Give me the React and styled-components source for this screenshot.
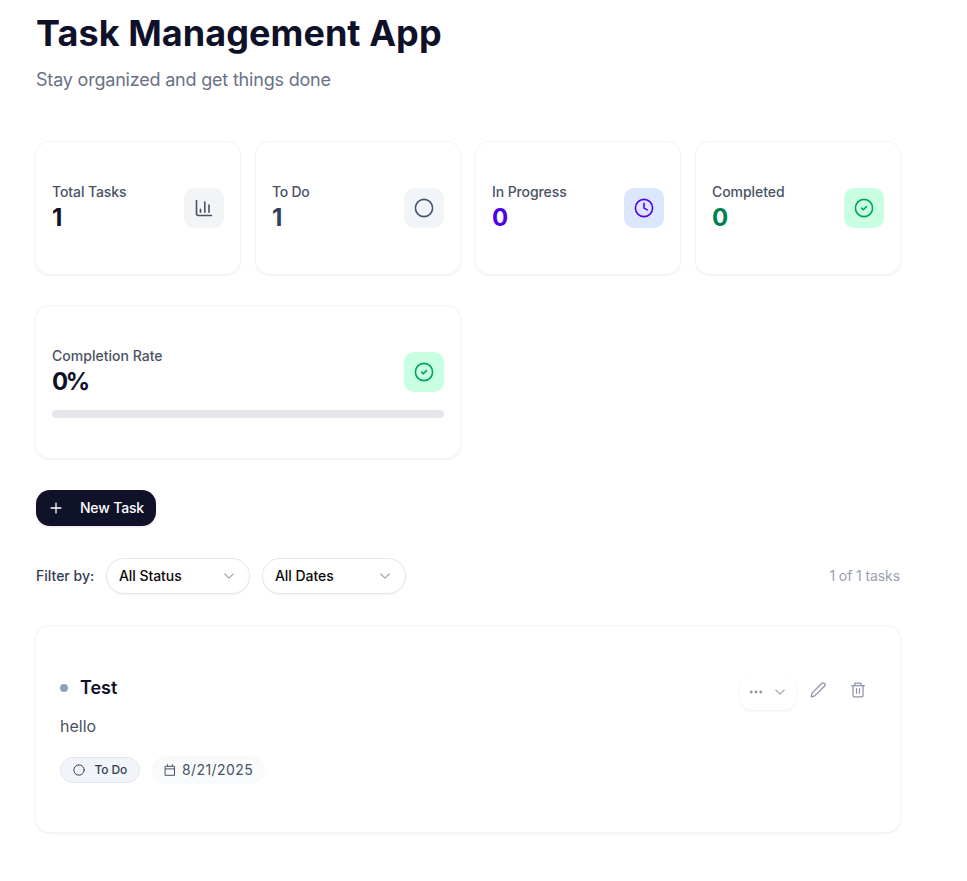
import React from 'react';
import styled, { createGlobalStyle } from 'styled-components';

const GlobalStyle = createGlobalStyle`
  *, *::before, *::after { box-sizing: border-box; }
  html, body { margin: 0; background: #fff; overflow: hidden; }
  body { font-family: Inter, "Liberation Sans", sans-serif; color: #0f1129; }
  h1, h2, p { margin: 0; }
  button { font: inherit; cursor: pointer; }
  svg { display: block; flex: none; }
`;

const Page = styled.main`
  width: 864px;
  height: 881px;
  margin-left: 36px;
  padding-top: 13px;
  display: flex;
  flex-direction: column;
`;
const Title = styled.h1`
  font-size: 36px;
  line-height: 40px;
  font-weight: 700;
  letter-spacing: 0.06px;
  white-space: nowrap;
`;
const Subtitle = styled.p`
  margin-top: 13px;
  font-size: 18px;
  line-height: 28px;
  letter-spacing: -0.2px;
  color: #6a7187;
`;
const Card = styled.section`
  border-radius: 14px;
  background: #fff;
  box-shadow: 0 0 0 1px #f3f4f6, 0 1px 3px rgba(0, 0, 0, 0.1), 0 1px 2px -1px rgba(0, 0, 0, 0.1);
`;
const Stats = styled.div`
  margin-top: 48px;
  display: grid;
  grid-template-columns: repeat(4, 1fr);
  gap: 32px 16px;
`;
const StatCard = styled(Card)`
  grid-column: span ${(p) => p.$span || 1};
  height: ${(p) => p.$height || 132}px;
  padding: 40px 16px 0;
`;
const StatRow = styled.div`
  display: flex;
  align-items: center;
  justify-content: space-between;
`;
const StatLabel = styled.p`
  font-size: 14px;
  line-height: 20px;
  font-weight: 500;
  letter-spacing: ${(p) => p.$track || 0}px;
  color: #4a5265;
`;
const StatValue = styled.p`
  font-size: 24px;
  line-height: 32px;
  font-weight: 700;
  letter-spacing: -2.4px;
  color: ${(p) => p.$color};
`;
const IconTile = styled.div`
  width: 40px;
  height: 40px;
  border-radius: 10px;
  display: grid;
  place-items: center;
  background: ${(p) => p.$bg};
  color: ${(p) => p.$color};
`;
const Track = styled.div`
  height: 8px;
  margin-top: 12px;
  border-radius: 4px;
  background: #e5e6eb;
`;
const NewTask = styled.button`
  width: 120px;
  height: 36px;
  margin-top: 32px;
  padding: 0 12px;
  border: 0;
  border-radius: 14px;
  display: flex;
  align-items: center;
  justify-content: space-between;
  color: #fff;
  background: #10122a;
  box-shadow: 0 1px 2px rgba(0, 0, 0, 0.1);
  font-size: 14px;
  font-weight: 500;
  letter-spacing: -0.16px;
  white-space: nowrap;
`;
const Filters = styled.div`
  margin-top: 32px;
  height: 36px;
  display: flex;
  align-items: center;
`;
/* Lifts a line of text slightly above the middle of its control. */
const Label = styled.span`
  padding-bottom: 2px;
`;
const FilterLabel = styled(Label)`
  width: 70px;
  font-size: 14px;
  font-weight: 500;
  color: #353d54;
  white-space: nowrap;
`;
const Select = styled.button`
  width: 144px;
  height: 36px;
  margin-right: 12px;
  padding: 0 12px;
  border: 1px solid #e5e6eb;
  border-radius: 18px;
  display: flex;
  align-items: center;
  justify-content: space-between;
  background: #fff;
  color: #0a0a0a;
  box-shadow: 0 1px 2px rgba(0, 0, 0, 0.05);
  font-size: 14px;
  font-weight: 500;
  letter-spacing: -0.06px;
`;
const Count = styled(Label)`
  margin-left: auto;
  font-size: 14px;
  letter-spacing: -0.1px;
  color: #9a9fb0;
`;
const TaskCard = styled(Card)`
  margin-top: 32px;
  height: 206px;
  padding: 48px 24px 0;
  display: flex;
  justify-content: space-between;
`;
const TaskHead = styled.div`
  display: flex;
  align-items: center;
  gap: 12px;
`;
const Dot = styled.span`
  width: 8px;
  height: 8px;
  border-radius: 50%;
  background: #90a0bd;
`;
const TaskTitle = styled.h2`
  font-size: 18px;
  line-height: 28px;
  font-weight: 600;
`;
const TaskText = styled.p`
  margin-top: 11px;
  font-size: 16px;
  line-height: 26px;
  color: #4a5265;
`;
const Meta = styled.div`
  margin-top: 17px;
  display: flex;
  align-items: center;
  gap: 12px;
`;
const StatusBadge = styled.span`
  width: 80px;
  height: 26px;
  padding: 0 12px;
  border: 1px solid #e2e8f0;
  border-radius: 13px;
  display: flex;
  align-items: center;
  justify-content: space-between;
  background: #f1f5f9;
  color: #353d54;
  font-size: 12px;
  font-weight: 500;
  letter-spacing: -0.15px;
`;
const DateBadge = styled.span`
  width: 113px;
  height: 28px;
  padding: 0 12px;
  border-radius: 14px;
  display: flex;
  align-items: center;
  gap: 6px;
  background: #f9fafb;
  color: #4a5265;
  font-size: 14px;
  letter-spacing: 0.42px;
`;
const Actions = styled.div`
  height: 36px;
  display: flex;
  align-items: flex-start;
  gap: 4px;
  color: #8e92a8;
`;
const StatusMenu = styled.button`
  width: 56px;
  height: 36px;
  padding: 0 8px;
  border: 0;
  border-radius: 12px;
  display: flex;
  align-items: center;
  justify-content: space-between;
  color: inherit;
  background: #fff;
  box-shadow: 0 1px 3px rgba(0, 0, 0, 0.07);
`;
const IconButton = styled.button`
  width: 36px;
  height: 32px;
  padding: 0;
  border: 0;
  display: grid;
  place-items: center;
  color: inherit;
  background: none;
`;

const Icon = ({ size = 16, box = 24, stroke = 1.6, color = 'currentColor', children }) => (
  <svg width={size} height={size} viewBox={`0 0 ${box} ${box}`} fill="none" stroke={color}
    strokeWidth={stroke} strokeLinecap="round" strokeLinejoin="round">{children}</svg>
);
const Chart = () => <Icon size={20} box={20}><path d="M2.5 2.5v13q0 2 2 2h13M6.5 14.3v-3M10.8 14.3V4M15 14.3V7" /></Icon>;
const Circle = ({ size = 20 }) => <Icon size={size} box={20}><circle cx="10" cy="10" r="8.6" /></Icon>;
const Clock = () => <Icon size={20} box={20}><circle cx="10" cy="10" r="8.6" /><path d="M10 5.2v4.9l3.3 1.8" /></Icon>;
const Check = () => <Icon size={20} box={20}><circle cx="10" cy="10" r="8.6" /><path d="m7.6 10.1 1.7 1.7 3.2-3.2" /></Icon>;
const Plus = () => <Icon stroke={1.9}><path d="M12 4.6v14.8M4.6 12h14.8" /></Icon>;
const Chevron = () => <Icon color="#a9a9ad" stroke={1.9}><path d="m5.8 9 6.2 6.2L18.2 9" /></Icon>;
const Dots = () => <Icon><g fill="currentColor" stroke="none"><circle cx="4.9" cy="12" r="2.1" /><circle cx="12" cy="12" r="2.1" /><circle cx="19.1" cy="12" r="2.1" /></g></Icon>;
const Pencil = () => <Icon size={16} box={16} stroke={1.25}><path d="M1.2 14.8l.8-3.7 9.6-9.6a1.9 1.9 0 0 1 2.8 2.8L4.8 13.9Z" /></Icon>;
const Trash = () => <Icon size={16} box={16} stroke={1.25}><path d="M1.6 3.5h12.8M5 3.3V1.2h6v2.1M3 3.6v9.9q0 1.3 1.3 1.3h7.4q1.3 0 1.3-1.3V3.6M6.5 6.7v4.6M9.5 6.7v4.6" /></Icon>;
const Calendar = () => <Icon size={12} box={12} stroke={1}><path d="M1.5 2.3h9v9h-9ZM1.5 4.9h9M3.6.6v1.7M8.4.6v1.7" /></Icon>;

const stats = [
  { label: 'Total Tasks', track: -0.1, value: '1', color: '#0f1129', bg: '#f3f4f6', ink: '#4a5265', icon: <Chart /> },
  { label: 'To Do', track: -0.25, value: '1', color: '#314158', bg: '#f1f5f9', ink: '#45556c', icon: <Circle /> },
  { label: 'In Progress', track: -0.1, value: '0', color: '#4f00e8', bg: '#dbe6ff', ink: '#5500f5', icon: <Clock /> },
  { label: 'Completed', track: -0.05, value: '0', color: '#008050', bg: '#c8ffe2', ink: '#00a162', icon: <Check /> },
  { label: 'Completion Rate', track: 0.02, value: '0%', color: '#0f1129', bg: '#c8ffe2', ink: '#00a162', icon: <Check />, progress: true },
];

export default function App() {
  return (
    <>
      <GlobalStyle />
      <Page>
        <Title>Task Management App</Title>
        <Subtitle>Stay organized and get things done</Subtitle>
        <Stats>
          {stats.map((s) => (
            <StatCard key={s.label} $span={s.progress ? 2 : 1} $height={s.progress ? 152 : 132}>
              <StatRow>
                <div>
                  <StatLabel $track={s.track}>{s.label}</StatLabel>
                  <StatValue $color={s.color}>{s.value}</StatValue>
                </div>
                <IconTile $bg={s.bg} $color={s.ink}>{s.icon}</IconTile>
              </StatRow>
              {s.progress && <Track />}
            </StatCard>
          ))}
        </Stats>
        <NewTask><Plus /><Label>New Task</Label></NewTask>
        <Filters>
          <FilterLabel>Filter by:</FilterLabel>
          <Select><Label>All Status</Label><Chevron /></Select>
          <Select><Label>All Dates</Label><Chevron /></Select>
          <Count>1 of 1 tasks</Count>
        </Filters>
        <TaskCard>
          <div>
            <TaskHead><Dot /><TaskTitle>Test</TaskTitle></TaskHead>
            <TaskText>hello</TaskText>
            <Meta>
              <StatusBadge><Circle size={12} /><Label>To Do</Label></StatusBadge>
              <DateBadge><Calendar /><Label>8/21/2025</Label></DateBadge>
            </Meta>
          </div>
          <Actions>
            <StatusMenu aria-label="Change status"><Dots /><Chevron /></StatusMenu>
            <IconButton aria-label="Edit task"><Pencil /></IconButton>
            <IconButton aria-label="Delete task"><Trash /></IconButton>
          </Actions>
        </TaskCard>
      </Page>
    </>
  );
}
